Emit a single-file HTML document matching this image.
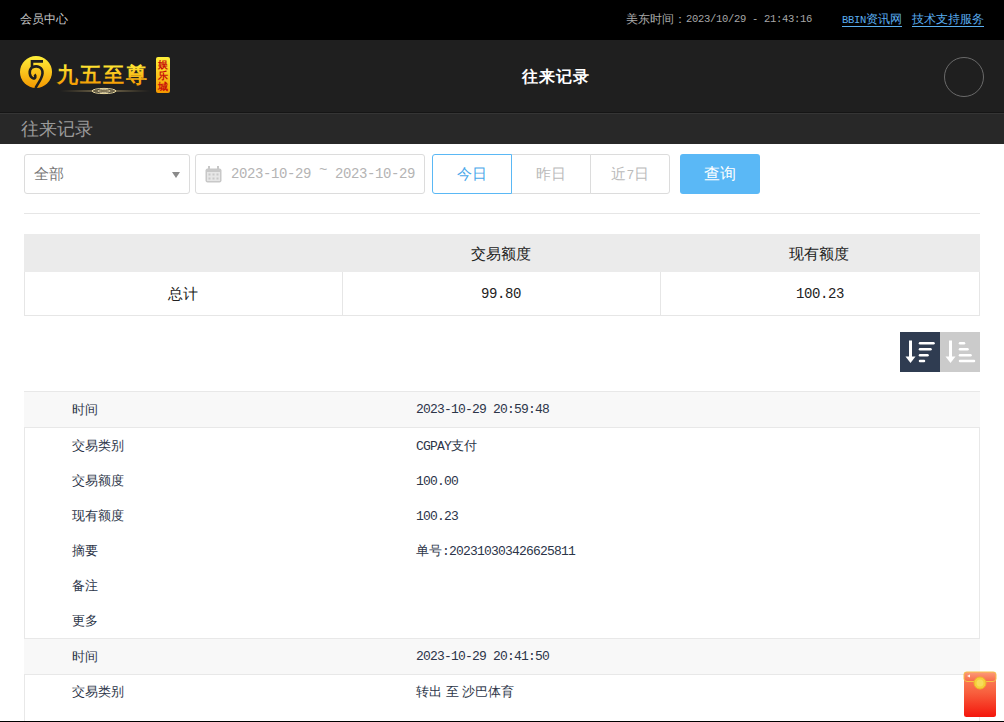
<!DOCTYPE html>
<html><head><meta charset="utf-8">
<style>
*{margin:0;padding:0;box-sizing:border-box}
html,body{width:1004px;height:722px;overflow:hidden;background:#fff;font-family:"Liberation Sans",sans-serif;font-size:12px;color:#333}
.abs{position:absolute;white-space:nowrap}
.mono{font-family:"Liberation Mono",monospace}
#topbar{position:absolute;left:0;top:0;width:1004px;height:40px;background:#000}
#header{position:absolute;left:0;top:40px;width:1004px;height:72px;background:#1f1f1f}
#sub{position:absolute;left:0;top:112px;width:1004px;height:32px;background:#282828;border-top:1px solid #151515;box-shadow:inset 0 1px 0 #353535}
.box{position:absolute;border:1px solid #dcdcdc;border-radius:3px;background:#fff}
.btn{position:absolute;top:154px;height:40px;border:1px solid #dcdcdc;background:#fff;color:#bbb;font-size:15px;line-height:38px;text-align:center}
.tbl{position:absolute;left:24px;top:234px;width:956px}
.row{position:absolute;left:24px;width:956px;height:35px;border-left:1px solid #e8e8e8;border-right:1px solid #e8e8e8}
.row.h{background:#f8f8f8;border-top:1px solid #e8e8e8;border-bottom:1px solid #e8e8e8;height:37px}
.lab{position:absolute;left:72px;color:#2c3548;font-size:13px;line-height:15px}
.val{position:absolute;left:416px;color:#2c3548;font-size:13px;line-height:15px}
.num{font-family:"Liberation Mono",monospace;font-size:13px;letter-spacing:-0.8px}
</style></head><body>
<div id="topbar">
  <div class="abs" style="left:20px;top:12px;color:#c8c8c8;font-size:12px;line-height:14px">会员中心</div>
  <div class="abs" style="left:626px;top:12px;color:#a8a8a8;font-size:12px;line-height:14px">美东时间：</div>
  <div class="abs mono" style="left:686px;top:12px;color:#a8a8a8;font-size:10.5px;letter-spacing:-0.3px;line-height:14px">2023/10/29 - 21:43:16</div>
  <div class="abs" style="left:842px;top:12px;color:#5aaef0;font-size:12px;line-height:14px;border-bottom:1px solid #5aaef0;height:15px"><span class="mono" style="font-size:10.5px;letter-spacing:-0.3px">BBIN</span>资讯网</div>
  <div class="abs" style="left:912px;top:12px;color:#5aaef0;font-size:12px;line-height:14px;border-bottom:1px solid #5aaef0;height:15px">技术支持服务</div>
</div>
<div id="header">
  <svg class="abs" style="left:18px;top:14px" width="156" height="42" viewBox="0 0 156 42">
    <defs>
      <linearGradient id="g1" x1="0" y1="0" x2="0" y2="1"><stop offset="0" stop-color="#fff03a"/><stop offset="1" stop-color="#f49800"/></linearGradient>
      <linearGradient id="g2" x1="0" y1="0" x2="1" y2="0"><stop offset="0" stop-color="#b09050" stop-opacity="0"/><stop offset="0.5" stop-color="#e8d090"/><stop offset="1" stop-color="#b09050" stop-opacity="0"/></linearGradient>
    </defs>
    <circle cx="18" cy="18" r="16" fill="url(#g1)"/>
    <g fill="none" stroke="#1f1f1f" stroke-width="2.6" stroke-linejoin="miter">
      <path d="M25,7.4 L14,7.4 L14,14"/>
      <path d="M14,13.5 C19,11 25,13 24.5,19.5 C24,25 20,29 17.5,34"/>
      <path d="M14,13.5 C10.5,16 11,23 15.5,24.5 C17.5,25 18,22 16.5,20.5"/>
    </g>
    <text x="39" y="27.5" font-size="21" font-weight="bold" fill="url(#g1)" letter-spacing="2">九五至尊</text>
    <rect x="42" y="36.5" width="90" height="1" fill="url(#g2)"/>
    <ellipse cx="86" cy="37" rx="12" ry="2.6" fill="none" stroke="#e8d8a0" stroke-width="1"/>
    <ellipse cx="86" cy="37" rx="6" ry="1.6" fill="none" stroke="#f0e0b0" stroke-width="0.8"/>
    <rect x="138" y="3" width="14" height="36" rx="2" fill="url(#g1)"/>
    <text x="145" y="14" text-anchor="middle" font-size="10" font-weight="bold" fill="#c8100a">娱</text>
    <text x="145" y="25" text-anchor="middle" font-size="10" font-weight="bold" fill="#c8100a">乐</text>
    <text x="145" y="36" text-anchor="middle" font-size="10" font-weight="bold" fill="#c8100a">城</text>
  </svg>
  <div class="abs" style="left:522px;top:28px;color:#fff;font-size:16px;font-weight:bold;line-height:18px;letter-spacing:1px">往来记录</div>
  <div class="abs" style="left:944px;top:17px;width:40px;height:40px;border:1px solid #6a6a6a;border-radius:50%"></div>
</div>
<div id="sub"><div class="abs" style="left:21px;top:6px;color:#9a9a9a;font-size:18px;line-height:20px">往来记录</div></div>

<!-- filters -->
<div class="box" style="left:24px;top:154px;width:166px;height:40px">
  <div class="abs" style="left:9px;top:10px;color:#777;font-size:15px;line-height:17px">全部</div>
  <div class="abs" style="left:147px;top:17px;width:0;height:0;border-left:4.5px solid transparent;border-right:4.5px solid transparent;border-top:6px solid #8a8a8a"></div>
</div>
<div class="box" style="left:195px;top:154px;width:230px;height:40px">
  <svg class="abs" style="left:9px;top:11px" width="17" height="17" viewBox="0 0 17 17">
    <rect x="0.5" y="2.5" width="16" height="14" rx="2" fill="#c8c8c8"/>
    <rect x="3" y="0" width="2" height="4" fill="#c8c8c8"/><rect x="12" y="0" width="2" height="4" fill="#c8c8c8"/>
    <rect x="2" y="6" width="13" height="9" fill="#e6e6e6"/>
    <g fill="#c8c8c8"><rect x="3.5" y="7.5" width="2" height="2"/><rect x="7.5" y="7.5" width="2" height="2"/><rect x="11.5" y="7.5" width="2" height="2"/><rect x="3.5" y="11.5" width="2" height="2"/><rect x="7.5" y="11.5" width="2" height="2"/><rect x="11.5" y="11.5" width="2" height="2"/></g>
  </svg>
  <div class="abs mono" style="left:35px;top:11px;color:#b4b4b4;font-size:14px;letter-spacing:-0.4px;line-height:17px">2023-10-29 <span style="position:relative;top:-4px">~</span> 2023-10-29</div>
</div>
<div class="btn" style="left:432px;width:80px;border-color:#5ab8f5;color:#4aa8ea;border-radius:3px 0 0 3px;z-index:2">今日</div>
<div class="btn" style="left:511px;width:80px">昨日</div>
<div class="btn" style="left:590px;width:80px;border-radius:0 3px 3px 0">近<span class="mono" style="font-size:13px;letter-spacing:-0.6px">7</span>日</div>
<div class="abs" style="left:680px;top:154px;width:80px;height:40px;background:#5ab8f6;border-radius:3px;color:#fff;font-size:16px;line-height:40px;text-align:center">查询</div>
<div class="abs" style="left:24px;top:213px;width:956px;height:1px;background:#e6e6e6"></div>

<!-- summary table -->
<div class="abs" style="left:24px;top:234px;width:956px;height:38px;background:#ebebeb"></div>
<div class="abs" style="left:24px;top:272px;width:956px;height:44px;border:1px solid #e6e6e6;border-top:none"></div>
<div class="abs" style="left:342px;top:272px;width:1px;height:43px;background:#e6e6e6"></div>
<div class="abs" style="left:660px;top:272px;width:1px;height:43px;background:#e6e6e6"></div>
<div class="abs" style="left:471px;top:245px;color:#222;font-size:15px;line-height:17px">交易额度</div>
<div class="abs" style="left:789px;top:245px;color:#222;font-size:15px;line-height:17px">现有额度</div>
<div class="abs" style="left:168px;top:285px;color:#222;font-size:15px;line-height:17px">总计</div>
<div class="abs num" style="left:481px;top:286px;color:#222;font-size:14px;letter-spacing:-0.4px;line-height:17px">99.80</div>
<div class="abs num" style="left:796px;top:286px;color:#222;font-size:14px;letter-spacing:-0.4px;line-height:17px">100.23</div>

<!-- sort buttons -->
<div class="abs" style="left:900px;top:332px;width:40px;height:40px;background:#2f3c51">
  <svg width="40" height="40" viewBox="0 0 40 40">
    <rect x="9" y="8.5" width="3" height="17" fill="#fff"/>
    <polygon points="5.5,24.5 15.5,24.5 10.5,31" fill="#fff"/>
    <g stroke="#fff" stroke-width="2.5" stroke-linecap="round">
      <line x1="20" y1="11.3" x2="33.5" y2="11.3"/><line x1="20" y1="17.2" x2="30.5" y2="17.2"/><line x1="20" y1="23.2" x2="27.5" y2="23.2"/><line x1="20" y1="29" x2="24" y2="29"/>
    </g>
  </svg>
</div>
<div class="abs" style="left:940px;top:332px;width:40px;height:40px;background:#cbcbcb">
  <svg width="40" height="40" viewBox="0 0 40 40">
    <rect x="9" y="8.5" width="3" height="17" fill="#fff"/>
    <polygon points="5.5,24.5 15.5,24.5 10.5,31" fill="#fff"/>
    <g stroke="#fff" stroke-width="2.5" stroke-linecap="round">
      <line x1="20" y1="11.3" x2="24" y2="11.3"/><line x1="20" y1="17.2" x2="27.5" y2="17.2"/><line x1="20" y1="23.2" x2="30.5" y2="23.2"/><line x1="20" y1="29" x2="34" y2="29"/>
    </g>
  </svg>
</div>

<!-- records -->
<div class="abs" style="left:24px;top:391px;width:1px;height:330px;background:#e8e8e8"></div>
<div class="abs" style="left:979px;top:391px;width:1px;height:330px;background:#e8e8e8"></div>
<div class="abs" style="left:24px;top:391px;width:956px;height:37px;background:#f8f8f8;border-top:1px solid #e8e8e8;border-bottom:1px solid #e8e8e8"></div><div class="abs lab" style="top:402px">时间</div><div class="abs val num" style="top:402px">2023-10-29 20:59:48</div>
<div class="abs lab" style="top:438px">交易类别</div><div class="abs val" style="top:438px"><span class="num">CGPAY</span>支付</div>
<div class="abs lab" style="top:473px">交易额度</div><div class="abs val" style="top:473px"><span class="num">100.00</span></div>
<div class="abs lab" style="top:508px">现有额度</div><div class="abs val" style="top:508px"><span class="num">100.23</span></div>
<div class="abs lab" style="top:543px">摘要</div><div class="abs val" style="top:543px">单号<span class="num">:202310303426625811</span></div>
<div class="abs lab" style="top:578px">备注</div>
<div class="abs lab" style="top:613px">更多</div>
<div class="abs" style="left:24px;top:638px;width:956px;height:37px;background:#f8f8f8;border-top:1px solid #e8e8e8;border-bottom:1px solid #e8e8e8"></div><div class="abs lab" style="top:649px">时间</div><div class="abs val num" style="top:649px">2023-10-29 20:41:50</div>
<div class="abs lab" style="top:684px">交易类别</div><div class="abs val" style="top:684px">转出 至 沙巴体育</div>
<svg class="abs" style="left:963px;top:671px" width="34" height="47" viewBox="0 0 34 47">
  <defs>
    <linearGradient id="eb" x1="0" y1="0" x2="0" y2="1"><stop offset="0" stop-color="#fb8a62"/><stop offset="0.45" stop-color="#f8603e"/><stop offset="1" stop-color="#f4160c"/></linearGradient>
    <linearGradient id="ef" x1="0" y1="0" x2="0" y2="1"><stop offset="0" stop-color="#fc9c78"/><stop offset="1" stop-color="#f86a48"/></linearGradient>
  </defs>
  <rect x="1" y="1" width="32" height="45" rx="2.5" fill="url(#eb)"/>
  <path d="M1,3.5 Q1,1 3.5,1 L30.5,1 Q33,1 33,3.5 L33,8 Q33,10 30,10.5 L4,10.5 Q1,10 1,8 Z" fill="url(#ef)" stroke="#f7c048" stroke-width="1"/>
  <circle cx="17" cy="12" r="6" fill="#f5cf3a" stroke="#eeb52c" stroke-width="1"/>
  <circle cx="17" cy="12" r="3.5" fill="#f8dc5a"/>
  <path d="M4,5 L7,3.5 L7,6.5 Z" fill="#fff" opacity="0.9"/>
</svg>
<div class="abs" style="left:0;top:721px;width:1004px;height:1px;background:#000"></div>
</body></html>
